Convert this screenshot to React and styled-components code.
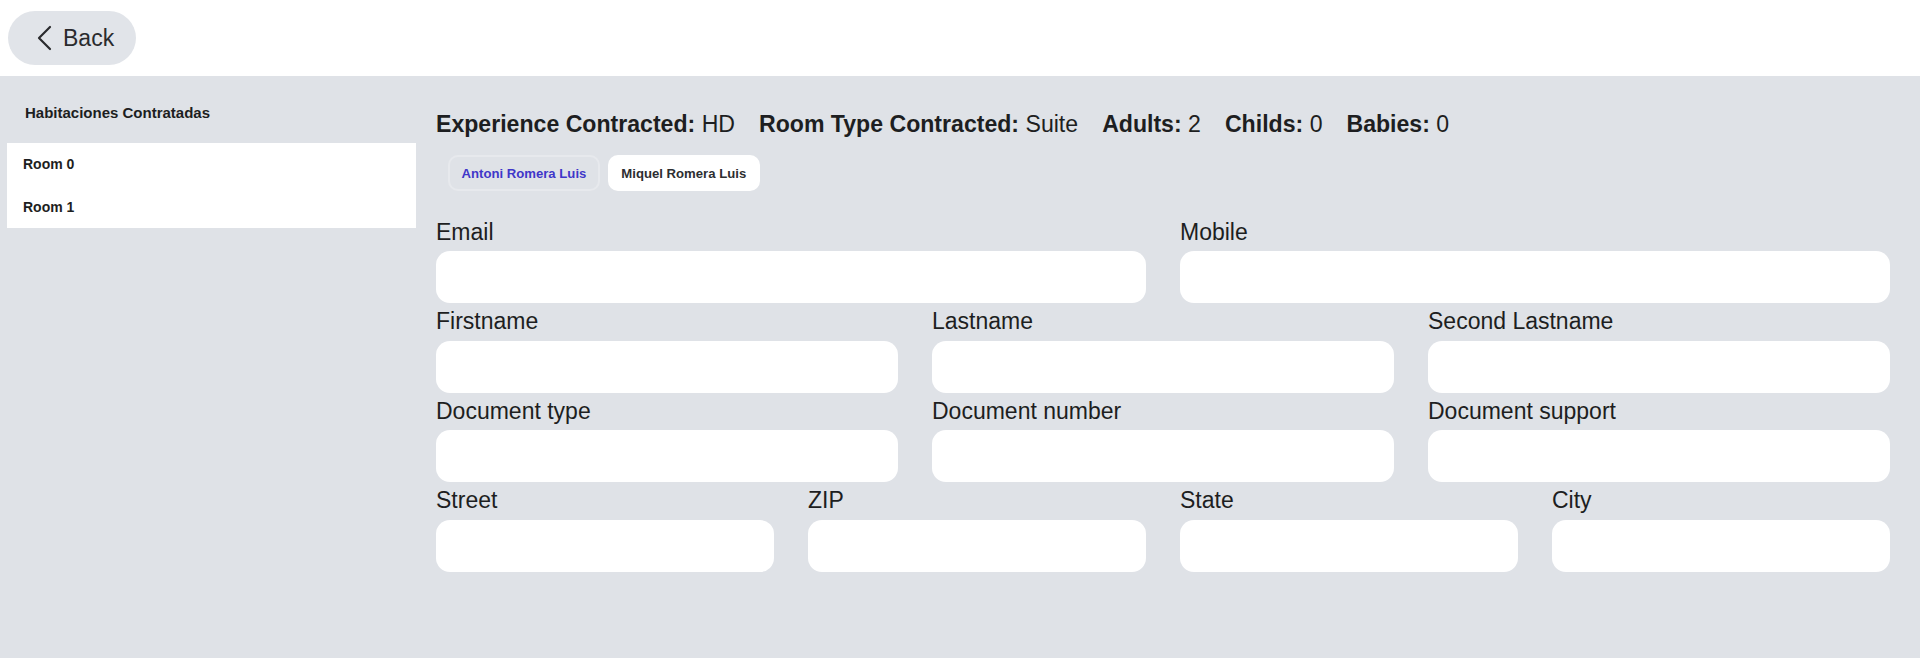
import React from 'react';
import styled, { createGlobalStyle } from 'styled-components';

const GlobalStyle = createGlobalStyle`
  html, body {
    margin: 0;
    padding: 0;
    background: #ffffff;
    font-family: "Liberation Sans", Arial, Helvetica, sans-serif;
    color: #1d1e21;
  }
  * {
    box-sizing: border-box;
  }
`;

const Header = styled.header`
  height: 76px;
  padding: 11px 8px;
  background: #ffffff;
  display: flex;
  align-items: flex-start;
`;

const BackButton = styled.button`
  height: 54px;
  width: 128px;
  padding: 0 0 0 28px;
  border: none;
  border-radius: 27px;
  background: #e1e4e9;
  display: flex;
  align-items: center;
  gap: 11px;
  font-family: inherit;
  font-size: 23px;
  color: #2a2b2e;
  cursor: pointer;
`;

const Body = styled.div`
  min-height: calc(100vh - 76px);
  background: #dfe2e7;
  display: flex;
  gap: 20px;
  padding: 0 30px 40px 7px;
`;

const Sidebar = styled.aside`
  width: 409px;
  flex-shrink: 0;
`;

const SidebarTitle = styled.h2`
  margin: 28px 0 21px;
  padding-left: 18px;
  font-size: 15px;
  line-height: 18px;
  font-weight: 700;
  color: #1d1e21;
`;

const RoomList = styled.ul`
  list-style: none;
  margin: 0;
  padding: 0;
  background: #ffffff;
`;

const RoomItem = styled.li`
  height: 42.5px;
  display: flex;
  align-items: center;
  padding-left: 16px;
  font-size: 14px;
  font-weight: 700;
  color: #1d1e21;
`;

const Main = styled.main`
  flex: 1;
  padding-top: 35px;
`;

const InfoLine = styled.div`
  display: flex;
  gap: 24px;
  font-size: 23.1px;
  line-height: 27px;
  color: #1d1e21;
`;

const InfoItem = styled.span`
  white-space: nowrap;

  b {
    font-weight: 700;
  }
`;

const Guests = styled.div`
  display: flex;
  gap: 8px;
  margin: 17px 0 0 12px;
`;

const GuestChip = styled.button`
  height: 36px;
  padding: 0 11.5px;
  border-radius: 10px;
  border: 2px solid ${(p) => (p.$active ? '#e7e9ed' : '#ffffff')};
  background: ${(p) => (p.$active ? '#dfe2e7' : '#ffffff')};
  color: ${(p) => (p.$active ? '#3f37c9' : '#2d2e31')};
  font-family: inherit;
  font-size: 13.15px;
  font-weight: 700;
  cursor: pointer;
`;

const Form = styled.div`
  margin-top: 26.5px;
  display: flex;
  flex-direction: column;
  gap: 4px;
`;

const Row = styled.div`
  display: flex;
  gap: 34px;
`;

const Field = styled.label`
  flex: 1;
  min-width: 0;
  display: flex;
  flex-direction: column;
`;

const Label = styled.span`
  font-size: 23px;
  line-height: 28px;
  margin-bottom: 5.5px;
  color: #1d1e21;
`;

const Input = styled.input`
  height: 52px;
  width: 100%;
  border: none;
  border-radius: 14px;
  background: #ffffff;
  padding: 0 16px;
  font-family: inherit;
  font-size: 18px;
  outline: none;
`;

const rows = [
  ['Email', 'Mobile'],
  ['Firstname', 'Lastname', 'Second Lastname'],
  ['Document type', 'Document number', 'Document support'],
  ['Street', 'ZIP', 'State', 'City'],
];

const info = [
  ['Experience Contracted:', 'HD'],
  ['Room Type Contracted:', 'Suite'],
  ['Adults:', '2'],
  ['Childs:', '0'],
  ['Babies:', '0'],
];

const ChevronLeft = () => (
  <svg width="16" height="26" viewBox="0 0 16 26" fill="none">
    <path d="M14 2 L3 13 L14 24" stroke="#2a2b2e" strokeWidth="2.2" strokeLinecap="round" strokeLinejoin="round" />
  </svg>
);

const App = () => {
  const [guest, setGuest] = React.useState(0);

  return (
    <>
      <GlobalStyle />
      <Header>
        <BackButton>
          <ChevronLeft />
          Back
        </BackButton>
      </Header>
      <Body>
        <Sidebar>
          <SidebarTitle>Habitaciones Contratadas</SidebarTitle>
          <RoomList>
            <RoomItem>Room 0</RoomItem>
            <RoomItem>Room 1</RoomItem>
          </RoomList>
        </Sidebar>
        <Main>
          <InfoLine>
            {info.map(([k, v]) => (
              <InfoItem key={k}>
                <b>{k}</b> {v}
              </InfoItem>
            ))}
          </InfoLine>
          <Guests>
            {['Antoni Romera Luis', 'Miquel Romera Luis'].map((name, i) => (
              <GuestChip key={name} $active={guest === i} onClick={() => setGuest(i)}>
                {name}
              </GuestChip>
            ))}
          </Guests>
          <Form>
            {rows.map((fields) => (
              <Row key={fields[0]}>
                {fields.map((f) => (
                  <Field key={f}>
                    <Label>{f}</Label>
                    <Input type="text" />
                  </Field>
                ))}
              </Row>
            ))}
          </Form>
        </Main>
      </Body>
    </>
  );
};

export default App;
